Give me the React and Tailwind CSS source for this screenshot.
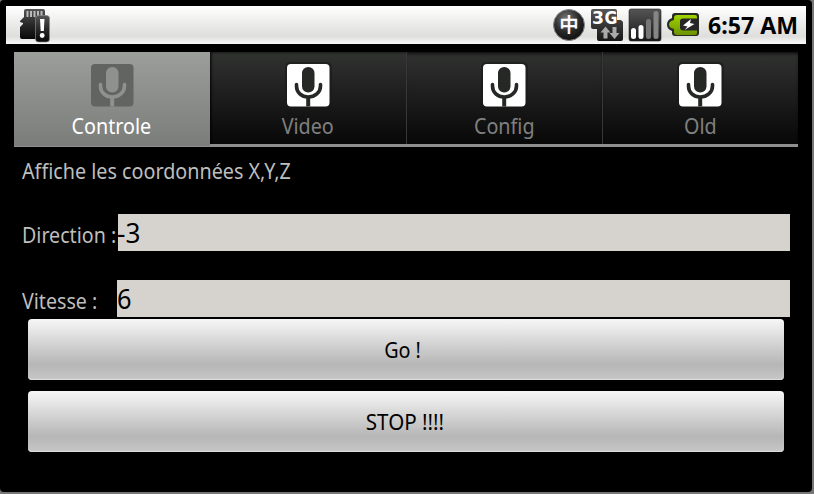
import React from 'react';

function MicIcon({ active }) {
  const mark = active ? '#8f918f' : '#252825';
  return (
    <svg width="48" height="48" viewBox="0 0 48 48" className="block" fill="none">
      {!active && <rect x="1" y="1" width="47" height="47" rx="5" fill="#171a17" opacity="0.6" />}
      <rect x="3" y="3" width="42.500" height="42.500" rx="4" fill={active ? '#626462' : '#ffffff'} />
      <rect x="18" y="6" width="12.5" height="25.5" rx="6.2" fill={mark} />
      <path d="M12.5 23.5v1.5c0 6.500 5 11 11.700 11S36.500 31.500 36.500 25v-1.500" stroke={mark} strokeWidth="3.600" strokeLinecap="round" />
      <path d="M24.200 35v10.500" stroke={mark} strokeWidth="4" />
    </svg>
  );
}

function Tab({ label, active, first }) {
  return (
    <div
      className={
        active
          ? 'flex h-[95px] w-[196px] flex-col items-center bg-linear-to-b from-[#9c9e9c] to-[#7b7d7b] border-b border-[#8e8e8e] text-white'
          : 'flex h-[95px] w-[196px] flex-col items-center border-b-3 border-[#8e8e8e] bg-linear-to-b from-[#313331] to-[#080808] text-[#808080] ' +
            (first ? 'shadow-[inset_3px_2px_3px_-2px_#000]' : 'shadow-[inset_1px_0_0_#383838,inset_0_3px_4px_-2px_#000]')
      }
    >
      <div className="mt-[9px] h-12"><MicIcon active={active} /></div>
      <span className={active ? 'mt-[3px] mr-px scale-x-[0.94] text-[21px] leading-7' : 'mt-[3px] scale-x-[0.94] text-[21px] leading-7'}>{label}</span>
    </div>
  );
}

function StatusIcons() {
  return (
    <svg width="150" height="38" viewBox="552 6 150 38" className="block">
      <defs>
        <radialGradient id="ball" cx=".4" cy=".3" r=".7">
          <stop offset="0" stopColor="#777" /><stop offset=".6" stopColor="#292929" /><stop offset="1" stopColor="#111" />
        </radialGradient>
        <linearGradient id="dark" x2="0" y2="1">
          <stop stopColor="#555" /><stop offset="1" stopColor="#171717" />
        </linearGradient>
        <linearGradient id="green" x2="0" y2="1">
          <stop stopColor="#a1d400" /><stop offset="1" stopColor="#6d9300" />
        </linearGradient>
      </defs>
      <circle cx="569" cy="25" r="15.500" fill="url(#ball)" stroke="#888" strokeWidth="1" />
      <text x="569" y="31.500" textAnchor="middle" fontSize="19" fontWeight="400" fill="#fff" stroke="#fff" strokeWidth=".7" fontFamily="Noto Sans CJK SC, sans-serif">中</text>
      <path d="M593 9h22q2 0 2 2v9h4l2 2v17q0 2-2 2h-22q-2 0-2-2V29h-4q-2 0-2-2V11q0-2 2-2z" fill="url(#dark)" />
      <g fontSize="17.500" fontWeight="700" fill="#fff" fontFamily="DejaVu Sans, sans-serif">
        <text x="592" y="23.700" textLength="12" lengthAdjust="spacingAndGlyphs">3</text>
        <text x="604.500" y="23.700" textLength="13" lengthAdjust="spacingAndGlyphs">G</text>
      </g>
      <path d="M605.500 26.500l5 6h-3v6h-4v-6h-3z" fill="#aaa" />
      <path d="M614.500 39l-5-6h3v-6h4v6h3z" fill="#aaa" />
      <rect x="629" y="9" width="32" height="32" rx="2" fill="url(#dark)" stroke="#222" strokeWidth=".6" />
      <rect x="631" y="28" width="5" height="11" rx="2.500" fill="#fff" />
      <rect x="638.500" y="25" width="5" height="14" rx="2.500" fill="#fff" />
      <rect x="646" y="19" width="5" height="20" rx="2.500" fill="#777" />
      <rect x="653.500" y="11" width="5" height="28" rx="2.500" fill="#858585" />
      <path d="M675 13h21q3 0 3 3v17q0 3-3 3h-21q-3 0-3-3v-2l-2-1q-3-2-3-5.500t3-5.500l2-1v-2q0-3 3-3z" fill="#292b27" />
      <path d="M677 15h18q2 0 2 2v16q0 2-2 2h-18q-3 0-3-3v-3q-5-1-5-4.500t5-4.500v-2q0-3 3-3z" fill="url(#green)" />
      <path d="M683 18.500h15v12h-15q-3 0-3-3v-6q0-3 3-3z" fill="#252625" />
      <path d="M691 19l-8 6.500 4.500 1-3 3.500 10-6-4.500-1z" fill="#fff" />
    </svg>
  );
}

function SdIcon() {
  return (
    <svg width="32" height="38" viewBox="19 6 32 38" className="block">
      <defs>
        <linearGradient id="card" x2="0" y2="1">
          <stop stopColor="#555" /><stop offset=".5" stopColor="#2a2a2a" /><stop offset="1" stopColor="#080808" />
        </linearGradient>
      </defs>
      <path d="M26 9h17q2 0 2 2v28H22q-2 0-2-2V27l3-3v-1l-3-1v-1l4-4v-6q0-2 2-2z" fill="url(#card)" />
      <path d="M27.500 11v6M31 11v6M34.500 11v6M38 11v6M41.500 11v5" stroke="#bbb" strokeWidth="2" />
      <rect x="35.500" y="15.500" width="14" height="26.500" rx="3" fill="url(#card)" stroke="#888" strokeWidth=".7" />
      <path d="M40 19h4.500l-.7 12h-3.100z" fill="#fff" />
      <circle cx="42.200" cy="35.500" r="2.400" fill="#fff" />
    </svg>
  );
}

function Field({ label, value, direction }) {
  return (
    <div className="flex h-[37px] pr-[22px] pl-[22px]">
      <div className={direction ? 'w-24 shrink-0 pt-[7px]' : 'w-[95px] shrink-0 pt-[7px]'}>
        <span className="inline-block origin-left scale-x-[0.935] whitespace-pre text-[21px] leading-7 text-[#bdbebd]">{label}</span>
      </div>
      <div className="flex-1 bg-[#d6d3ce] text-[27px] leading-[37px] text-black">
        <span className={direction ? '-ml-px inline-block origin-left scale-x-[0.97]' : 'inline-block origin-left scale-x-[0.94]'}>{value}</span>
      </div>
    </div>
  );
}

function ActionButton({ children }) {
  return (
    <button className="flex h-[61px] w-[756px] items-center justify-center rounded-[4px] bg-linear-to-b from-[#f7f7f7] via-[#b5b6b5] via-75% to-[#c6c7c6] pt-0.5 pr-[7px] text-[21px] text-black shadow-[inset_0_-1px_1px_#ddd]">
      {children}
    </button>
  );
}

export default function App() {
  return (
    <div className="h-[494px] w-[814px] overflow-hidden bg-[#777]">
      <div className="h-[492px] w-[812px] rounded-[4px] bg-black pt-1.5 font-['Noto_Sans','Open_Sans',sans-serif] [font-variant-ligatures:none]">
        <header className="ml-1.5 flex h-[38px] w-[800px] bg-linear-to-b from-white via-[#dededc] via-80% to-[#fafafa] pl-[13px]">
          <SdIcon />
          <div className="ml-[501px]"><StatusIcons /></div>
          <div className="ml-1.5 h-[38px] text-[23px] leading-[38px] font-bold whitespace-nowrap text-black">
            <span className="inline-block origin-left scale-x-[1.005]">6:57 AM</span>
          </div>
        </header>
        <nav className="mt-2 ml-3.5 flex w-[784px]">
          <Tab label="Controle" active />
          <Tab label="Video" first />
          <Tab label="Config" />
          <Tab label="Old" />
        </nav>
        <main>
          <p className="mt-[10px] h-7 pl-[22px] text-[21px] leading-7 text-[#bdbebd]">
            <span className="inline-block origin-left scale-x-[0.94]">Affiche les coordonnées X,Y,Z</span>
          </p>
          <div className="mt-[29px]"><Field label="Direction :" value="-3" direction /></div>
          <div className="mt-[29px]"><Field label="Vitesse :" value="6" /></div>
          <div className="mt-0.5 ml-7 flex flex-col gap-[11px]">
            <ActionButton><span className="inline-block scale-x-[0.94]">Go !</span></ActionButton>
            <ActionButton><span className="ml-1 inline-block scale-x-[0.98]">STOP !!!!</span></ActionButton>
          </div>
        </main>
      </div>
    </div>
  );
}
